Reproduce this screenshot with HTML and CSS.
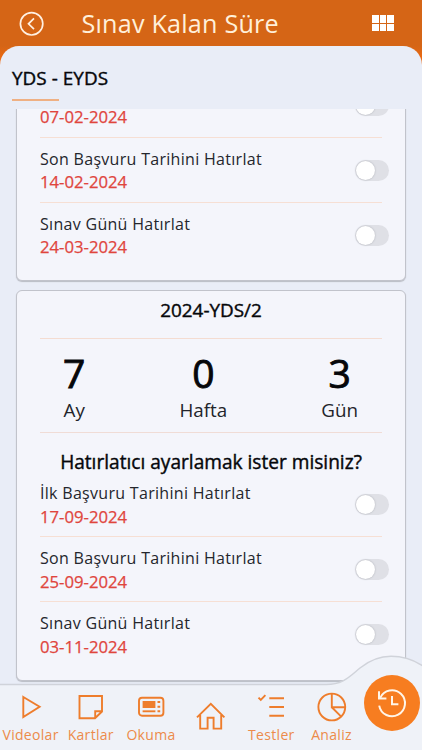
FILE: index.html
```html
<!DOCTYPE html>
<html lang="tr">
<head>
<meta charset="UTF-8">
<title>Sınav Kalan Süre</title>
<link rel="stylesheet" href="styles.css">
</head>
<body>
<div class="app">
  <div class="header">
    <svg class="back" width="26" height="26" viewBox="0 0 26 26">
      <circle cx="13.6" cy="12.8" r="11.2"/>
      <path d="M16 7.4 L10.5 12.8 L16 18.2"/>
    </svg>
    <h1>Sınav Kalan Süre</h1>
    <div class="grid"><i></i><i></i><i></i><i></i><i></i><i></i></div>
  </div>

  <div class="panel">
    <h2>YDS - EYDS</h2>
    <div class="underline"></div>

    <div class="scroller">
      <div class="card card-prev">
        <div class="row">
          <div class="text"><div class="label"></div><div class="date">07-02-2024</div></div>
          <div class="toggle"></div>
        </div>
        <div class="row">
          <div class="text"><div class="label">Son Başvuru Tarihini Hatırlat</div><div class="date">14-02-2024</div></div>
          <div class="toggle"></div>
        </div>
        <div class="row">
          <div class="text"><div class="label">Sınav Günü Hatırlat</div><div class="date">24-03-2024</div></div>
          <div class="toggle"></div>
        </div>
      </div>

      <div class="card">
        <h3>2024-YDS/2</h3>
        <div class="counter">
          <div><b>7</b><span>Ay</span></div>
          <div><b>0</b><span>Hafta</span></div>
          <div><b>3</b><span>Gün</span></div>
        </div>
        <h4>Hatırlatıcı ayarlamak ister misiniz?</h4>
        <div class="row">
          <div class="text"><div class="label">İlk Başvuru Tarihini Hatırlat</div><div class="date">17-09-2024</div></div>
          <div class="toggle"></div>
        </div>
        <div class="row">
          <div class="text"><div class="label">Son Başvuru Tarihini Hatırlat</div><div class="date">25-09-2024</div></div>
          <div class="toggle"></div>
        </div>
        <div class="row">
          <div class="text"><div class="label">Sınav Günü Hatırlat</div><div class="date">03-11-2024</div></div>
          <div class="toggle"></div>
        </div>
      </div>
    </div>
  </div>

  <div class="nav">
    <svg class="nav-bg" width="422" height="100" viewBox="0 0 422 100">
      <path d="M-4 34.5 H326 C343 34.5 349 27 360 18 C370 10 379 6.3 391 6.3 C404 6.3 415 10 426 18 V104 H-4 Z"/>
    </svg>
    <div class="item">
      <svg width="30" height="30" viewBox="0 0 30 30"><path d="M7.3 5 L23.6 14.8 L7.3 25 Z"/></svg>
      <span>Videolar</span>
    </div>
    <div class="item">
      <svg width="30" height="30" viewBox="0 0 30 30"><path d="M3.5 4 H26 V19.5 L19 26.3 H3.5 Z M26 19.3 H19.2 V26"/></svg>
      <span>Kartlar</span>
    </div>
    <div class="item">
      <svg width="30" height="30" viewBox="0 0 30 30">
        <rect x="3" y="5.8" width="24.4" height="18" rx="3"/>
        <rect class="fill" x="6.6" y="9" width="12.8" height="7"/>
        <path d="M6.6 19.3 H19.4"/>
        <path d="M21.5 10 H24.2 M21.5 14.7 H24.2 M21.5 19.3 H24.2"/>
      </svg>
      <span>Okuma</span>
    </div>
    <div class="item home">
      <svg width="30" height="30" viewBox="0 0 30 30"><path d="M4.2 13 V26.6 H11.6 V15.8 H17.6 V26.6 H25.2 V13 M1 15.4 L14.8 1.8 L28.4 15.4"/></svg>
    </div>
    <div class="item">
      <svg width="30" height="30" viewBox="0 0 30 30"><path d="M2.5 5.6 L4.8 8 L9.4 3.2 M13.3 6.2 H28 M13.3 15 H28 M13.3 23.8 H28"/></svg>
      <span>Testler</span>
    </div>
    <div class="item">
      <svg width="30" height="30" viewBox="0 0 30 30"><circle cx="14.8" cy="15" r="13.4"/><path d="M14.8 1.6 V15.3 H28.2 M14.8 15.3 L24.2 24.6"/></svg>
      <span>Analiz</span>
    </div>
    <div class="item active">
      <svg width="32" height="32" viewBox="0 0 32 32">
        <path d="M4.2 10.8 A13 13 0 1 1 3.2 18.6"/>
        <path d="M3 4.2 V11.4 H10.4"/>
        <path d="M16 9 V17.2 H22.4"/>
      </svg>
    </div>
  </div>
</div>
</body>
</html>
```

FILE: styles.css
```css
* { box-sizing: border-box; }
body {
  margin: 0;
  font-family: "Open Sans", "Noto Sans", sans-serif;
  color: #06070a;
}
h1, h2, h3, h4 { margin: 0; font-weight: normal; }

.app {
  width: 422px;
  height: 750px;
  display: flex;
  flex-direction: column;
  overflow: hidden;
  background: linear-gradient(#d56516 46px, #ee6a12 60px);
}
.header {
  height: 46px;
  flex: none;
  display: flex;
  align-items: center;
  padding: 0 28.5px 0 18px;
}
.back {
  margin-top: 2px;
  fill: none;
  stroke: #fff0e2;
  stroke-width: 1.7;
}
.header h1 {
  flex: 1;
  margin-left: 37.5px;
  font-size: 25.2px;
  line-height: 46px;
  letter-spacing: 0.2px;
  color: #fff0da;
}
.grid {
  display: grid;
  grid-template-columns: repeat(3, 6.4px);
  grid-auto-rows: 7.5px;
  gap: 1px;
}
.grid i { background: #fff; }

.panel {
  flex: 1;
  min-height: 0;
  display: flex;
  flex-direction: column;
  background: #e9edf7;
  border-radius: 19px 19px 0 0;
}
.panel h2 {
  padding: 18px 12px 0;
  font-size: 18.9px;
  line-height: 28px;
  letter-spacing: 0.05px;
  -webkit-text-stroke: 0.4px;
}
.underline {
  width: 47px;
  height: 2px;
  margin: 7px 0 0 12px;
  background: #efb083;
}
.scroller {
  flex: 1;
  overflow: hidden;
  margin-top: 8px;
  padding: 0 16px;
}

.card {
  height: 391px;
  margin-bottom: 9px;
  padding: 0 23px;
  background: #f4f5fb;
  border: 1px solid #c1c3cb;
  border-radius: 6px;
  box-shadow: 0 1px 1px #b9bcc4;
}
.card-prev {
  height: 209px;
  margin-top: -37px;
}
.card h3 {
  height: 48px;
  padding-top: 6px;
  font-size: 18.9px;
  line-height: 26px;
  text-align: center;
  border-bottom: 1px solid #f4dcd1;
  -webkit-text-stroke: 0.4px;
}
.counter {
  height: 94px;
  display: flex;
  justify-content: space-between;
  padding: 9px 24px 0 23px;
  border-bottom: 1px solid #f0dcd6;
}
.counter div {
  display: flex;
  flex-direction: column;
  align-items: center;
}
.counter b {
  font-size: 39px;
  font-weight: normal;
  line-height: 50px;
  -webkit-text-stroke: 0.9px;
}
.counter span {
  font-size: 18.8px;
  line-height: 24px;
  color: #22242a;
}
.card h4 {
  height: 39px;
  padding-top: 16px;
  font-size: 19.1px;
  line-height: 26px;
  text-align: center;
  white-space: nowrap;
  -webkit-text-stroke: 0.4px;
}

.row {
  height: 65px;
  display: flex;
  justify-content: space-between;
  border-bottom: 1px solid #f6dfd4;
}
.row:last-child { border-bottom: 0; }
.text { padding-top: 9px; }
.label {
  height: 24px;
  font-size: 16px;
  line-height: 24px;
  letter-spacing: 0.3px;
  color: #24262c;
}
.date {
  font-size: 16.7px;
  line-height: 23px;
  color: #e0453d;
  -webkit-text-stroke: 0.25px;
}
.card-prev .date { margin-top: -1px; }
.toggle {
  width: 34px;
  height: 21px;
  margin: 22px -7px 0 0;
  padding: 1px;
  border-radius: 11px;
  background: #dfe0e6;
}
.toggle::before {
  content: "";
  display: block;
  width: 19px;
  height: 19px;
  border-radius: 50%;
  background: #fff;
  box-shadow: 0 0 2px #a9abb3;
}

.nav {
  position: relative;
  height: 65px;
  flex: none;
  display: flex;
  padding-left: 0.5px;
}
.nav-bg {
  position: absolute;
  left: 0;
  bottom: 0;
  fill: #eff2f8;
  stroke: #d0d3da;
  stroke-width: 1.5;
}
.item {
  position: relative;
  width: 60.2px;
  flex: none;
  display: flex;
  flex-direction: column;
  align-items: center;
  padding-top: 7px;
}
.item svg {
  fill: none;
  stroke: #ee7d2c;
  stroke-width: 1.9;
}
.item .fill { fill: #ee7d2c; stroke: none; }
.item span {
  margin-top: 2px;
  font-size: 14px;
  line-height: 21px;
  letter-spacing: 0.3px;
  color: #ec8b4a;
}
.home { padding-top: 17px; }
.active {
  width: 56px;
  height: 56px;
  margin: -10px 0 0 2px;
  padding: 0;
  justify-content: center;
  border-radius: 50%;
  background: #f77d20;
}
.active svg {
  stroke: #fff5e8;
  stroke-width: 2;
}
```
